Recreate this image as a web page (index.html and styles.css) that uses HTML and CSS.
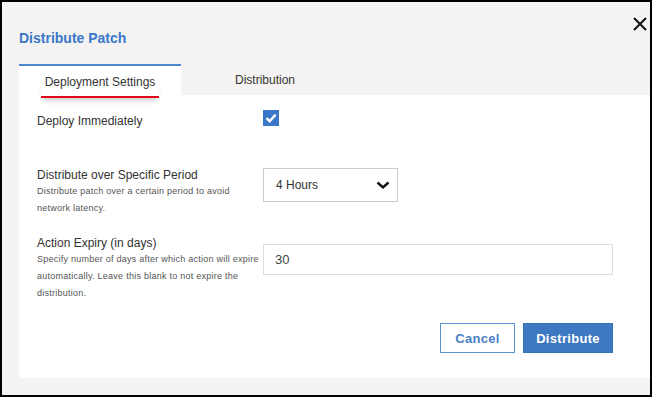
FILE: index.html
```html
<!DOCTYPE html>
<html lang="en">
<head>
    <meta charset="UTF-8">
    <meta name="viewport" content="width=device-width, initial-scale=1.0">
    <title>Distribute Patch</title>
    <link rel="stylesheet" href="styles.css">
</head>
<body>
    <div class="dialog">
        <button class="close" aria-label="Close">
            <svg width="14" height="14" viewBox="0 0 14 14"><path d="M1 1L13 13M13 1L1 13" stroke="#111" stroke-width="2"/></svg>
        </button>

        <h2 class="title">Distribute Patch</h2>

        <div class="tabs">
            <div class="tab active"><span>Deployment Settings</span></div>
            <div class="tab"><span>Distribution</span></div>
        </div>

        <div class="content">
            <div class="row row-deploy">
                <div class="field-info">
                    <label class="label">Deploy Immediately</label>
                </div>
                <span class="check">
                    <svg width="16" height="16" viewBox="0 0 16 16"><path d="M3.5 8.2L6.6 11.2L12.6 4.6" fill="none" stroke="#fff" stroke-width="2.4"/></svg>
                </span>
            </div>

            <div class="row row-period">
                <div class="field-info">
                    <label class="label">Distribute over Specific Period</label>
                    <p class="desc">Distribute patch over a certain period to avoid network latency.</p>
                </div>
                <div class="select">
                    <span>4 Hours</span>
                    <svg width="14" height="10" viewBox="0 0 14 10"><path d="M1.5 2.5L7 7.5L12.5 2.5" fill="none" stroke="#111" stroke-width="2.4"/></svg>
                </div>
            </div>

            <div class="row row-expiry">
                <div class="field-info">
                    <label class="label" for="expiry">Action Expiry (in days)</label>
                    <p class="desc">Specify number of days after which action will expire automatically. Leave this blank to not expire the distribution.</p>
                </div>
                <input type="text" id="expiry" class="text-input" value="30">
            </div>

            <div class="actions">
                <button class="btn btn-cancel">Cancel</button>
                <button class="btn btn-primary">Distribute</button>
            </div>
        </div>
    </div>
</body>
</html>
```

FILE: styles.css
```css
body {
    margin: 0;
    font-family: 'Liberation Sans', Arial, sans-serif;
    color: #333;
}
.dialog {
    position: relative;
    width: 652px;
    height: 397px;
    box-sizing: border-box;
    border: 2px solid #000;
    background: #f4f3f2;
    display: flex;
    flex-direction: column;
}
.close {
    position: absolute;
    top: 15px;
    right: 3px;
    padding: 0;
    border: none;
    background: none;
    line-height: 0;
    cursor: pointer;
}
.title {
    margin: 28px 0 18px 17px;
    font-size: 14px;
    line-height: 16px;
    font-weight: 700;
    color: #3a77c8;
}
.tabs {
    display: flex;
    height: 31px;
    margin-left: 17px;
}
.tab {
    box-sizing: border-box;
    height: 31px;
    padding-top: 9px;
    text-align: center;
    font-size: 12px;
    line-height: 14px;
    color: #333;
}
.tab:first-child {
    width: 162px;
}
.tab:last-child {
    width: 168px;
}
.tab.active {
    background: #fff;
    border-top: 2px solid #5089d1;
}
.tab.active span {
    position: relative;
    z-index: 1;
    display: inline-block;
    padding: 0 4px 7px;
    border-bottom: 2px solid #e0081c;
    box-shadow: 0 5px 5px -2px rgba(0, 0, 0, 0.18);
}
.content {
    flex: 1;
    margin: 0 0 17px 17px;
    padding: 0 37px 0 18px;
    background: #fff;
}
.row {
    display: flex;
    align-items: flex-start;
}
.field-info {
    width: 226px;
    flex-shrink: 0;
    padding-top: 1px;
}
.label {
    display: block;
    font-size: 12px;
    line-height: 16px;
    color: #333;
}
.desc {
    width: 225px;
    margin: 0;
    font-size: 9px;
    line-height: 17px;
    letter-spacing: 0.25px;
    color: #555;
}
.row-deploy {
    margin-top: 15px;
}
.row-deploy .label {
    margin-top: 2px;
}
.check {
    display: block;
    width: 16px;
    height: 16px;
    background: #3a78c9;
    line-height: 0;
}
.row-period {
    margin-top: 37px;
}
.select {
    box-sizing: border-box;
    width: 135px;
    height: 34px;
    margin-top: 2px;
    padding: 0 7px 0 12px;
    border: 1px solid #ccc;
    display: flex;
    align-items: center;
    justify-content: space-between;
    font-size: 12px;
    color: #333;
}
.row-expiry {
    margin-top: 17px;
}
.text-input {
    box-sizing: border-box;
    width: 350px;
    height: 31px;
    margin-top: 10px;
    padding: 0 11px;
    border: 1px solid #ddd;
    font-family: 'Liberation Sans', Arial, sans-serif;
    font-size: 13px;
    color: #444;
    outline: none;
}
.actions {
    display: flex;
    justify-content: flex-end;
    gap: 8px;
    margin-top: 21px;
}
.btn {
    box-sizing: border-box;
    height: 30px;
    padding: 0;
    font-family: 'Liberation Sans', Arial, sans-serif;
    font-size: 13px;
    font-weight: 700;
    letter-spacing: 0.3px;
    cursor: pointer;
}
.btn-cancel {
    width: 75px;
    background: #fff;
    border: 1px solid #5b8fd0;
    color: #4a80c6;
}
.btn-primary {
    width: 90px;
    background: #3d78c3;
    border: 1px solid #3670bb;
    color: #fff;
}
```
